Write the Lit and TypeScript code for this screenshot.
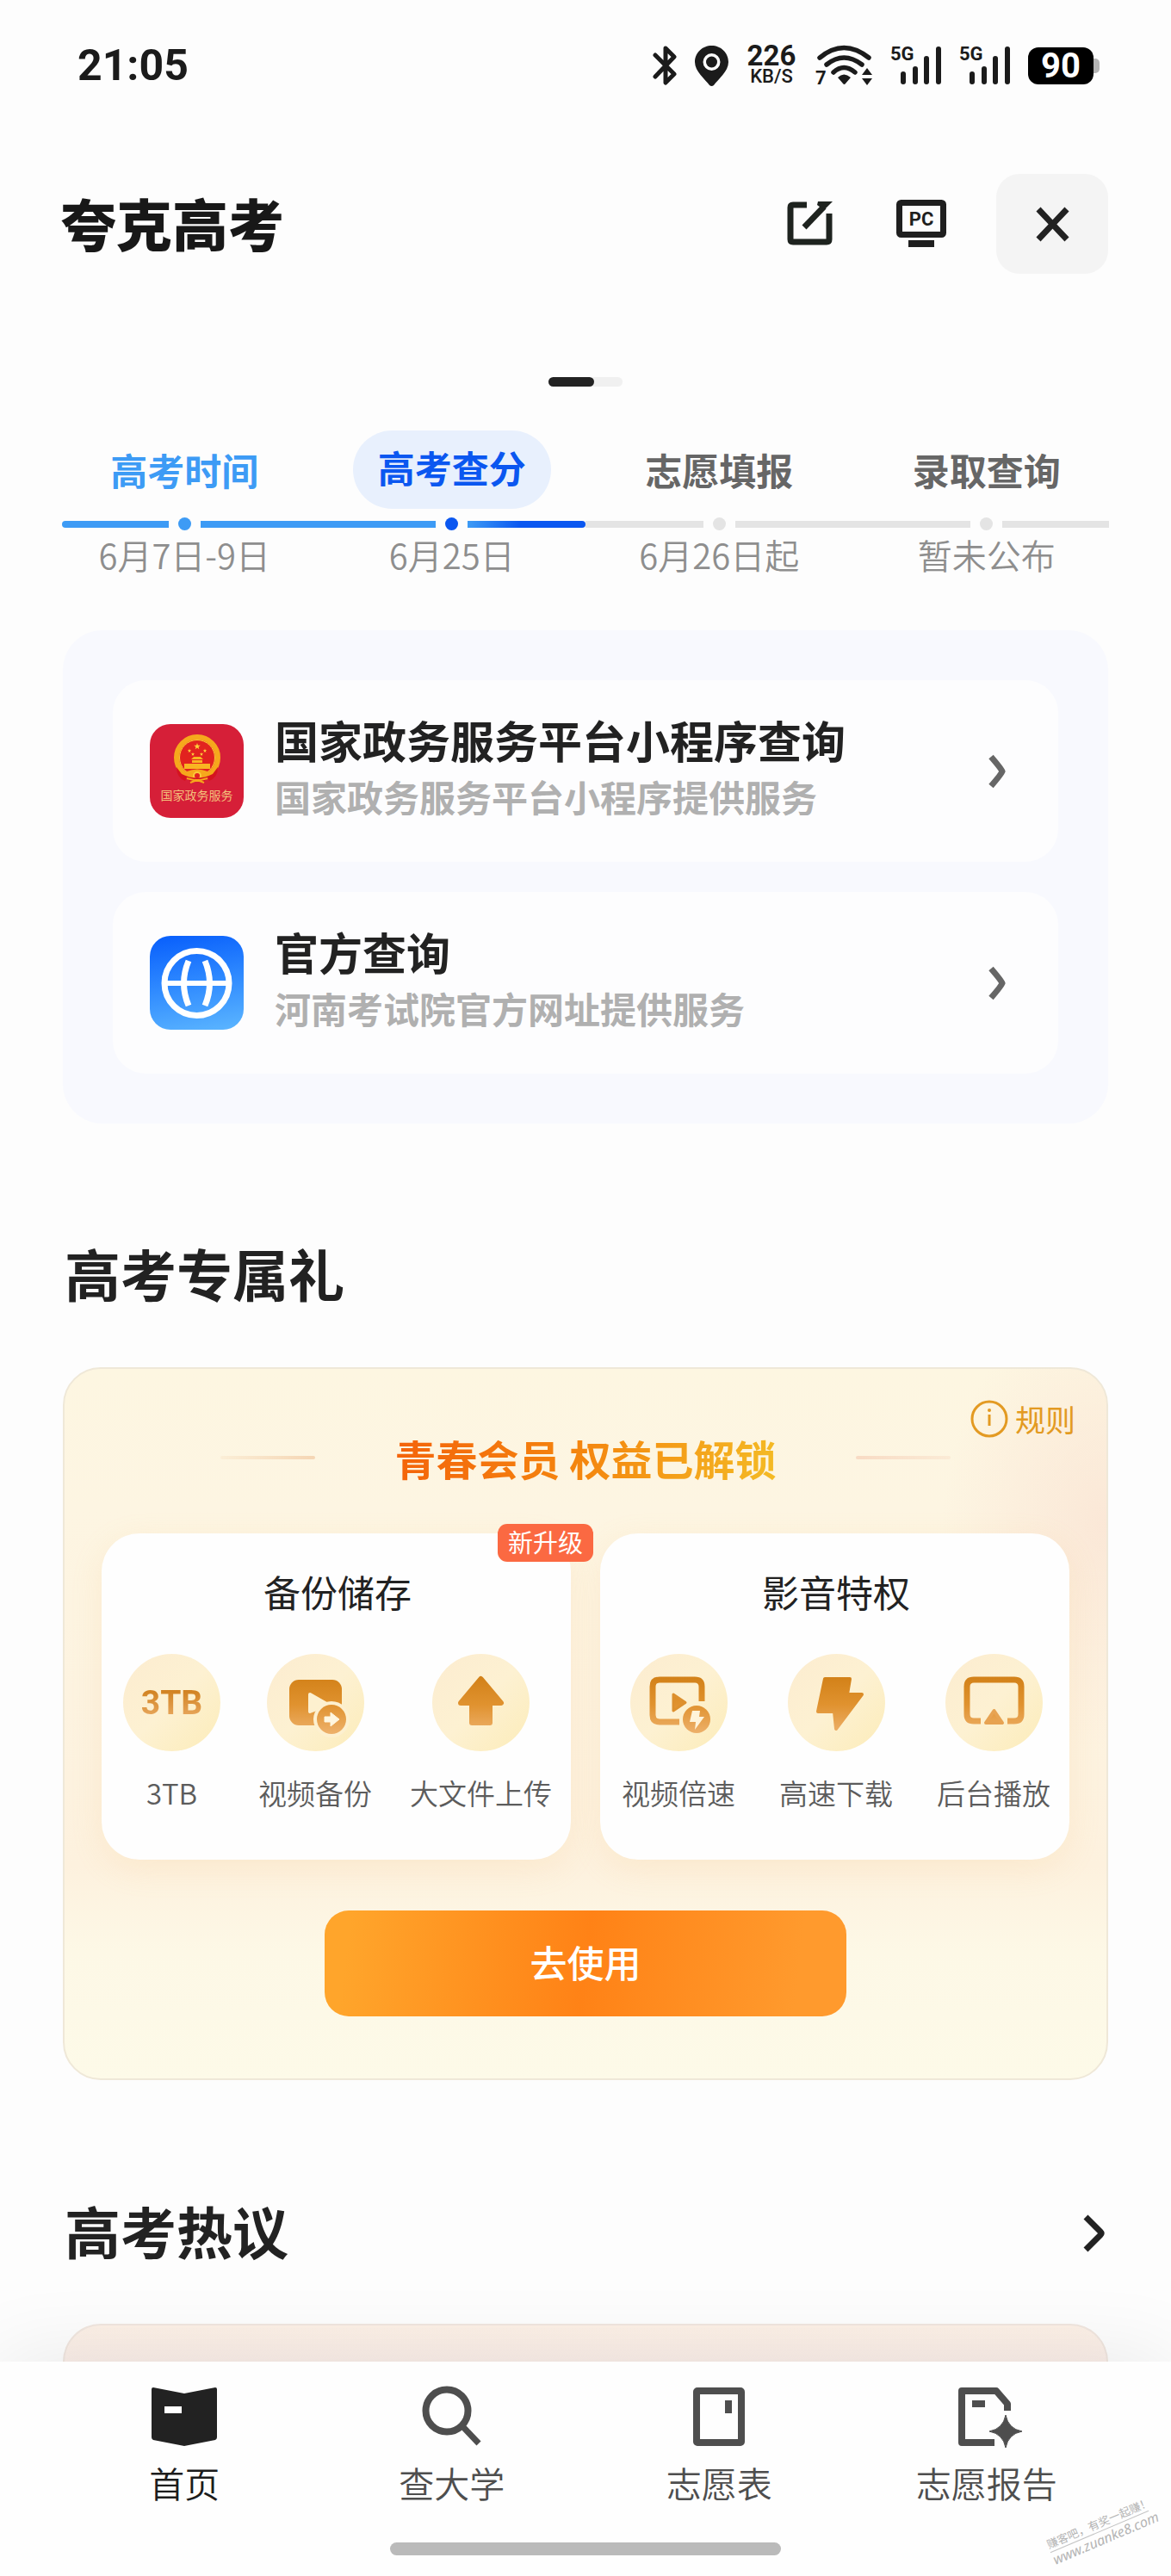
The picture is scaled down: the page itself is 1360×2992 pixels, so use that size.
import { LitElement, html, css, svg } from "lit";
import { customElement, state } from "lit/decorators.js";
import { classMap } from "lit/directives/class-map.js";

interface Stage {
  name: string;
  date: string;
  before: string;
  dot: string;
  after: string;
}

const stages: Stage[] = [
  { name: "高考时间", date: "6月7日-9日", before: "past", dot: "past", after: "past" },
  { name: "高考查分", date: "6月25日", before: "past", dot: "now", after: "fade" },
  { name: "志愿填报", date: "6月26日起", before: "next", dot: "next", after: "next" },
  { name: "录取查询", date: "暂未公布", before: "next", dot: "next", after: "next" },
];

const star = (cx: number, cy: number, r: number) => {
  let d = "";
  for (let i = 0; i < 10; i++) {
    const a = (Math.PI / 5) * i - Math.PI / 2;
    const q = i % 2 ? r * 0.4 : r;
    d += `${i ? "L" : "M"}${(cx + q * Math.cos(a)).toFixed(2)} ${(cy + q * Math.sin(a)).toFixed(2)}`;
  }
  return d + "Z";
};

const emblem = html`<svg class="emblem" viewBox="0 0 64 58" aria-hidden="true">
  <circle cx="32" cy="27" r="24" fill="#e2231f" stroke="#f6a81c" stroke-width="6" />
  <circle cx="32" cy="27" r="20.500" fill="none" stroke="#fbc93a" stroke-width="1" />
  <path d=${star(32, 14, 4)} fill="#fdd23c" />
  <path d=${star(23, 19, 2.4) + star(41, 19, 2.4) + star(27, 23, 2.2) + star(37, 23, 2.2)} fill="#fdd23c" />
  <path d="M25 29 L28 26 H36 L39 29 Z M26 30 H38 V33 H26 Z M17 34 H47 V40 H17 Z" fill="#f9b522" />
  <path d="M20 43 Q32 38 44 43 L47 50 Q32 43 17 50 Z" fill="#f6a81c" />
  <circle cx="32" cy="48" r="4" fill="#e2231f" stroke="#fbc93a" stroke-width="2" />
  <path d="M8 38 Q8 50 18 54 L20 50 L24 55 L30 52 H34 L40 55 L44 50 L46 54 Q56 50 56 38 L50 46 Q32 55 14 46 Z" fill="#d5131f" />
  <path d="M20 51 L32 54 L44 51 M24 56 L32 53 L40 56" fill="none" stroke="#f6a81c" stroke-width="2" />
</svg>`;

const globe = html`<svg class="globe" viewBox="0 0 109 109" aria-hidden="true">
  <g fill="none" stroke="#fff">
    <circle cx="54.5" cy="55" r="37.500" stroke-width="7" />
    <path d="M18 55 H91" stroke-width="6" />
    <path d="M45 29 Q34 55 45 81 M64 29 Q75 55 64 81" stroke-width="7" />
  </g>
</svg>`;

const services = [
  { name: "国家政务服务平台小程序查询", note: "国家政务服务平台小程序提供服务", kind: "gov", art: emblem, caption: "国家政务服务" },
  { name: "官方查询", note: "河南考试院官方网址提供服务", kind: "web", art: globe, caption: "" },
];

const gold = (id: string) => svg`<linearGradient id=${id} gradientUnits="userSpaceOnUse" x1="0" y1="26" x2="0" y2="92">
  <stop offset="0" stop-color="#d28118" /><stop offset=".5" stop-color="#e0922f" /><stop offset="1" stop-color="#edb06a" />
</linearGradient>`;

const disc = (body: unknown, id: string) => html`<svg viewBox="0 0 113 113" aria-hidden="true">
  <defs>${gold(id)}</defs>${body}
</svg>`;

const benefits = [
  {
    title: "备份储存",
    badge: "新升级",
    items: [
      { label: "3TB", art: html`<span class="capacity">3TB</span>` },
      {
        label: "视频备份",
        art: disc(svg`
          <rect x="26" y="30" width="61" height="53" rx="11" fill="url(#g1)" />
          <path d="M50 47 L71 59 L50 67 Z" fill="#fdf0cf" stroke="#fdf0cf" stroke-width="4" stroke-linejoin="round" />
          <circle cx="75" cy="76" r="21" fill="#fdf0cf" />
          <circle cx="75" cy="76" r="17" fill="url(#g1)" />
          <path d="M67 73 H74 V68 L84 76 L74 84 V79 H67 Z" fill="#fff6df" stroke="#fff6df" stroke-width="1" stroke-linejoin="round" />`, "g1"),
      },
      {
        label: "大文件上传",
        art: disc(svg`
          <path d="M56.500 29 L80 57 H67 V80 H46 V57 H33 Z" fill="url(#g2)" stroke="url(#g2)" stroke-width="6" stroke-linejoin="round" />`, "g2"),
      },
    ],
  },
  {
    title: "影音特权",
    badge: "",
    items: [
      {
        label: "视频倍速",
        art: disc(svg`
          <path d="M57 79 H34 Q26 79 26 71 V38 Q26 30 34 30 H75 Q83 30 83 38 V55" fill="none" stroke="url(#g3)" stroke-width="7" />
          <path d="M50 47 L64 56.500 L50 66 Z" fill="url(#g3)" stroke="#dd902e" stroke-width="3" stroke-linejoin="round" />
          <circle cx="77" cy="76" r="16" fill="url(#g3)" />
          <path d="M72 66 H81 L80 73 H86 L75 88 L76 79 H69 Z" fill="#fff4da" />`, "g3"),
      },
      {
        label: "高速下载",
        art: disc(svg`
          <path d="M43 29 H72 L69 47 H86 L56 87 L54 67 H35 Z" fill="url(#g4)" stroke="url(#g4)" stroke-width="4" stroke-linejoin="round" />`, "g4"),
      },
      {
        label: "后台播放",
        art: disc(svg`
          <path d="M41 78 H33 Q25 78 25 70 V38 Q25 30 33 30 H80 Q88 30 88 38 V70 Q88 78 80 78 H72" fill="none" stroke="url(#g5)" stroke-width="7" />
          <path d="M56.500 66 L66 80 H47 Z" fill="url(#g5)" stroke="#e7a352" stroke-width="4" stroke-linejoin="round" />`, "g5"),
      },
    ],
  },
];

const navItems = [
  {
    label: "首页",
    art: svg`<path d="M4 2 Q2 2 2 4 V60 Q2 62 4 63 L40 70 L76 63 Q78 62 78 60 V4 Q78 2 76 2 L40 9 Z" fill="#222" />
      <path d="M17 24 H37 V32 H17 Z" fill="#fff" />`,
  },
  {
    label: "查大学",
    art: svg`<g fill="none" stroke="#4e4e4e" stroke-width="8"><circle cx="34" cy="29" r="24.500" /><path d="M52 47 L71 67" stroke-width="7" /></g>`,
  },
  {
    label: "志愿表",
    art: svg`<rect x="14" y="6" width="52" height="60" rx="1" fill="none" stroke="#4e4e4e" stroke-width="8" stroke-linejoin="round" />
      <path d="M47 17 H55 V32 H47 Z" fill="#4e4e4e" />`,
  },
  {
    label: "志愿报告",
    art: svg`<path d="M49 66 H11 V6 H51 L64 21 V29" fill="none" stroke="#4e4e4e" stroke-width="8" stroke-linejoin="round" />
      <path d="M23 17 H38 V25 H23 Z" fill="#4e4e4e" />
      <path d="M62 34 Q65 50 81 53 Q65 56 62 72 Q59 56 43 53 Q59 50 62 34 Z" fill="#4e4e4e" stroke="#4e4e4e" stroke-width="1" />`,
  },
];

const signal = html`<svg class="signal" viewBox="0 0 60 48" role="img" aria-label="5G">
  <text x="0" y="18" class="gen">5G</text>
  <path d="M15 34 V43 M29 28 V43 M42 16 V43 M56 5 V43" fill="none" stroke="#1b1b1b" stroke-width="6" stroke-linecap="round" />
</svg>`;

@customElement("app-root")
export class AppRoot extends LitElement {
  @state() private stage = 1;
  @state() private tab = 0;

  static styles = css`
    :host {
      display: block;
      font-family: Roboto, "Noto Sans CJK SC", sans-serif;
      color: #222;
      background: #fdfdfd;
    }
    * { box-sizing: border-box; }
    svg { display: block; flex: none; overflow: visible; }
    h1, h2, h3, p { margin: 0; }
    a { color: inherit; text-decoration: none; }
    button { font: inherit; color: inherit; background: none; border: 0; padding: 0; cursor: pointer; }

    .page { display: flex; flex-direction: column; min-height: 100vh; overflow: hidden; }
    h1, h2, h3, .stages, .services, .gift, nav { font-family: "Noto Sans CJK SC", sans-serif; }

    .status { display: flex; justify-content: space-between; align-items: center; height: 48px; margin-top: 52px; padding: 0 83px 0 90px; color: #1b1b1b; }
    .clock { font-size: 50px; line-height: 48px; font-weight: 700; }
    .indicators { display: flex; align-items: center; gap: 20px; }
    .bt { width: 28px; height: 48px; }
    .pin { width: 39px; height: 48px; }
    .wifi { width: 68px; height: 48px; }
    .signal { width: 60px; height: 48px; }
    .gen { font: 700 22px Roboto, sans-serif; fill: #1b1b1b; }
    .seven { font: 700 22px Roboto, sans-serif; fill: #1b1b1b; }
    .speed { display: flex; flex-direction: column; align-items: center; width: 60px; font-weight: 700; }
    .rate { font-size: 33px; line-height: 26px; }
    .unit { font-size: 22px; line-height: 22px; font-weight: 500; }
    .battery { display: flex; align-items: center; }
    .level { width: 76px; height: 43px; border-radius: 12px; background: #000; color: #fff; font-size: 40px; line-height: 44px; font-weight: 700; text-align: center; }
    .nub { width: 7px; height: 17px; border-radius: 0 5px 5px 0; background: #b4b4b4; }

    header { display: flex; align-items: center; justify-content: space-between; margin-top: 102px; padding: 0 71px 0 70px; padding-right: 73px; }
    h1 { padding-bottom: 4px; font-size: 65px; line-height: 84px; font-weight: 900; color: #181818; }
    .tools { display: flex; gap: 14px; }
    .tool { display: flex; align-items: center; justify-content: center; width: 116px; height: 116px; }
    .tool svg { width: 60px; height: 58px; }
    .close { width: 130px; margin-left: 15px; border-radius: 27px; background: #f4f4f4; }
    .pc { font: 700 22px Roboto, sans-serif; fill: #1f1f1f; }

    .pager { display: flex; width: 86px; height: 11px; margin: 120px auto 0; border-radius: 6px; background: #f0f0f0; }
    .pager-on { width: 53px; border-radius: 6px; background: #222; }

    .stages { display: grid; grid-template-columns: repeat(4, 1fr); margin-top: 51px; padding: 0 59px; }
    .stage { display: flex; flex-direction: column; align-items: center; }
    .stage-name { height: 91px; padding: 0 29px 2px; border-radius: 46px; font-size: 43px; line-height: 50px; font-weight: 700; color: #666; white-space: nowrap; }
    .stage-name.done { color: #3d9bf5; }
    .stage-name.active { color: #0b57f0; background: #e8f0fd; padding-bottom: 8px; }
    .track { display: grid; grid-template-columns: 1fr 15px 1fr; align-items: center; gap: 11px; width: 100%; height: 15px; margin-top: 10px; }
    .seg { height: 8px; }
    .stage:first-child .seg:first-child { margin-left: 13px; border-radius: 4px 0 0 4px; }
    .stage:last-child .seg:last-child { margin-right: 13px; }
    .dot { width: 15px; height: 15px; border-radius: 50%; }
    .past { background: #3d9bf5; }
    .now { background: #0b57f0; }
    .next { background: #e4e4e4; }
    .fade { border-radius: 0 4px 4px 0; background: linear-gradient(90deg, #3d9bf5, #0b57f0 45%); }
    .stage-date { margin-top: -2px; font-size: 40px; line-height: 60px; font-weight: 350; color: #8e8e8e; }

    .body { display: flex; flex-direction: column; flex: 1; padding: 0 73px; }
    .services { display: flex; flex-direction: column; gap: 35px; margin-top: 58px; padding: 58px; border-radius: 46px; background: #f8f9fe; }
    .service { display: flex; align-items: center; height: 211px; padding: 0 60px 0 43px; border-radius: 38px; background: #fdfdfe; }
    .logo { display: flex; flex-direction: column; align-items: center; flex: none; width: 109px; height: 109px; border-radius: 24px; overflow: hidden; }
    .gov { padding-top: 12px; background: #d61f38; }
    .web { background: linear-gradient(170deg, #0b62fc 5%, #2f8aff 50%, #5cb6ff); }
    .emblem { width: 64px; height: 58px; }
    .globe { width: 109px; height: 109px; }
    .caption { font-size: 14px; line-height: 24px; color: #f3bf7a; white-space: nowrap; }
    .service-text { flex: 1; min-width: 0; margin-left: 36px; padding-bottom: 8px; }
    h3.service-name { font-size: 51px; line-height: 66px; font-weight: 700; }
    .service-note { font-size: 42px; line-height: 66px; font-weight: 700; color: #b0b0b0; }
    .chev { width: 22px; height: 42px; }

    .section-head { display: flex; align-items: center; justify-content: space-between; margin-top: 133px; }
    h2 { padding-left: 2px; font-size: 65px; line-height: 80px; font-weight: 700; }
    .more { width: 30px; height: 48px; margin-top: 8px; }

    .gift { position: relative; margin-top: 70px; padding: 71px 43px 72px; border: 2px solid #efe8d8; border-radius: 44px;
      background:
        radial-gradient(ellipse 190px 260px at 100% 22%, rgba(250, 228, 212, .8), rgba(250, 228, 212, 0)),
        linear-gradient(180deg, #fdf6e1 0%, #fdf5e2 20%, #fdf1de 70%, #fdf8e6 82%, #fdfae8 100%); }
    .rules { position: absolute; top: 35px; right: 36px; display: flex; align-items: center; gap: 8px; font-size: 35px; line-height: 46px; color: #e39a22; }
    .rules svg { width: 44px; height: 44px; }
    .gift-head { display: flex; align-items: center; justify-content: center; gap: 93px; }
    .gift-title { font-size: 48px; line-height: 64px; font-weight: 700; color: transparent; background: linear-gradient(100deg, #f4630a, #f4870f 50%, #f4bb25); background-clip: text; -webkit-background-clip: text; white-space: nowrap; }
    .rule { width: 110px; height: 4px; border-radius: 2px; background: linear-gradient(90deg, rgba(244, 208, 170, .2), #f5d6b4); }
    .rule.flip { background: linear-gradient(90deg, #f8dbc4, rgba(248, 219, 196, .4)); }
    .perks { display: grid; grid-template-columns: 1fr 1fr; gap: 34px; margin-top: 56px; }
    .perk { position: relative; padding: 37px 22px 58px 25px; border-radius: 44px; background: #fefefe; box-shadow: 0 10px 36px rgba(240, 190, 120, .16); }
    .badge { position: absolute; top: -11px; right: -26px; z-index: 1; padding: 0 12px 4px; border-radius: 11px; background: #fb6942; color: #fff; font-size: 29px; line-height: 40px; }
    h3.perk-name { font-size: 43px; line-height: 60px; font-weight: 400; text-align: center; }
    .perk-row { display: flex; justify-content: space-between; margin-top: 43px; }
    .perk-item { display: flex; flex-direction: column; align-items: center; gap: 28px; }
    .disc { display: flex; align-items: center; justify-content: center; width: 113px; height: 113px; border-radius: 50%; background: linear-gradient(135deg, #fcecd0, #fdf1d2 50%, #fcecb9); }
    .disc svg { width: 113px; height: 113px; }
    .capacity { font: 700 39px/50px Roboto, sans-serif; color: transparent; background: linear-gradient(180deg, #cf7f1c 15%, #e9a960 85%); background-clip: text; -webkit-background-clip: text; }
    .perk-label { font-size: 33px; line-height: 40px; font-weight: 350; color: #5c5c5c; white-space: nowrap; }
    .use { display: block; width: 54%; height: 123px; margin: 59px auto 0; padding-bottom: 6px; border-radius: 28px; background: linear-gradient(97deg, #ffa52b 5%, #ff8216 50%, #ff9a2d 90%); color: #fff; font-size: 43px; line-height: 60px; font-weight: 500; }

    .hot-card { flex: 1; min-height: 44px; margin-top: 69px; border: 2px solid #f0e6df; border-bottom: 0; border-radius: 44px 44px 0 0; background: linear-gradient(180deg, #fcf0e6, #faeee9 44px); }
    .hot { margin-top: 134px; }

    nav { position: relative; padding-bottom: 24px; background: #fefefe; box-shadow: 0 0 100px rgba(0, 0, 0, .09); }
    .tabs { display: grid; grid-template-columns: repeat(4, 1fr); padding: 28px 59px 0; }
    .tab { display: flex; flex-direction: column; align-items: center; gap: 15px; font-size: 41px; line-height: 50px; color: #4e4e4e; font-weight: 350; }
    .tab.on { color: #1c1c1c; }
    .tab svg { width: 80px; height: 72px; }
    .home-bar { width: 33.3333%; height: 15px; margin: 45px auto 0; border-radius: 8px; background: #bababa; }
    .stamp { position: absolute; right: 21px; bottom: 33px; width: 124px; transform: rotate(-23deg); font-size: 13px; line-height: 18px; color: #b4b4b4; text-align: center; white-space: nowrap; }
    .stamp-site { border-top: 1px solid #c4c4c4; font-family: "Noto Sans", sans-serif; font-style: italic; font-size: 16px; }
  `;

  private renderStatus() {
    return html`<div class="status">
      <span class="clock">21:05</span>
      <div class="indicators">
        <svg class="bt" viewBox="0 0 28 48" aria-hidden="true">
          <path d="M2 12 L24 34 L14 44 V4 L24 14 L2 37" fill="none" stroke="#1b1b1b" stroke-width="5" stroke-linejoin="round" stroke-linecap="round" />
        </svg>
        <svg class="pin" viewBox="0 0 39 48" aria-hidden="true">
          <path fill-rule="evenodd" d="M19.500 1 C9 1 0 9 0 20 C0 31 12 40 17 47 Q19.500 49 22 47 C27 40 39 31 39 20 C39 9 30 1 19.500 1 Z M19.500 10 A10 10 0 1 1 19.500 30 A10 10 0 1 1 19.500 10 Z" fill="#1b1b1b" />
          <circle cx="19.5" cy="20" r="6.500" fill="#1b1b1b" />
        </svg>
        <span class="speed"><span class="rate">226</span><span class="unit">KB/S</span></span>
        <svg class="wifi" viewBox="0 0 68 48" aria-hidden="true">
          <text x="1" y="46" class="seven">7</text>
          <g fill="none" stroke="#1b1b1b" stroke-width="5.500" stroke-linecap="round">
            <path d="M6 15 Q34 -8 63 15" /><path d="M14 23 Q34 7 55 23" /><path d="M22 32 Q34 21 47 32" />
          </g>
          <path d="M27 38 Q34 31 42 38 L36 45 Q34.500 47 33 45 Z M61 27 L67 35 H55 Z M61 47 L67 39 H55 Z" fill="#1b1b1b" />
        </svg>
        ${signal}${signal}
        <span class="battery"><span class="level">90</span><span class="nub"></span></span>
      </div>
    </div>`;
  }

  private renderHeader() {
    return html`<header>
      <h1>夸克高考</h1>
      <div class="tools">
        <button class="tool" aria-label="编辑">
          <svg viewBox="0 0 60 58" aria-hidden="true">
            <path d="M27 7 H11 Q8 7 8 10 V47 Q8 50 11 50 H50 Q53 50 53 47 V17" fill="none" stroke="#1e231f" stroke-width="7" />
            <path d="M24 33 L47 9" stroke="#1e231f" stroke-width="7" />
            <path d="M40 3 H57 L47 13 L39 7 Z" fill="#1e231f" />
          </svg>
        </button>
        <button class="tool" aria-label="电脑版">
          <svg viewBox="0 0 60 58" aria-hidden="true">
            <rect x="4.500" y="4.500" width="51" height="37" rx="2" fill="none" stroke="#1f1f1f" stroke-width="7" />
            <text class="pc" x="30" y="31" text-anchor="middle">PC</text>
            <path d="M15 48 H45 V56 H15 Z" fill="#1f1f1f" />
          </svg>
        </button>
        <button class="tool close" aria-label="关闭">
          <svg viewBox="0 0 60 58" aria-hidden="true">
            <path d="M14 12 L47 47 M47 12 L14 47" stroke="#222" stroke-width="7" />
          </svg>
        </button>
      </div>
    </header>`;
  }

  private renderGift() {
    return html`<section class="gift">
      <a class="rules" href="#rules">
        <svg viewBox="0 0 44 44" aria-hidden="true">
          <circle cx="22" cy="22" r="20" fill="none" stroke="#e39a22" stroke-width="3" />
          <path d="M22 17 V30" stroke="#e39a22" stroke-width="3" /><circle cx="22" cy="12" r="2" fill="#e39a22" />
        </svg>
        规则
      </a>
      <div class="gift-head">
        <span class="rule"></span>
        <p class="gift-title">青春会员 权益已解锁</p>
        <span class="rule flip"></span>
      </div>
      <div class="perks">
        ${benefits.map((b) => html`<div class="perk">
          ${b.badge ? html`<span class="badge">${b.badge}</span>` : ""}
          <h3 class="perk-name">${b.title}</h3>
          <div class="perk-row">
            ${b.items.map((i) => html`<div class="perk-item">
              <span class="disc">${i.art}</span>
              <span class="perk-label">${i.label}</span>
            </div>`)}
          </div>
        </div>`)}
      </div>
      <button class="use">去使用</button>
    </section>`;
  }

  render() {
    return html`<div class="page">
      ${this.renderStatus()}${this.renderHeader()}
      <div class="pager"><span class="pager-on"></span></div>
      <div class="stages">
        ${stages.map((s, i) => html`<div class="stage">
          <button
            class=${classMap({ "stage-name": true, done: i < this.stage, active: i === this.stage })}
            @click=${() => (this.stage = i)}
          >${s.name}</button>
          <div class="track">
            <span class="seg ${s.before}"></span><span class="dot ${s.dot}"></span><span class="seg ${s.after}"></span>
          </div>
          <span class="stage-date">${s.date}</span>
        </div>`)}
      </div>
      <main class="body">
        <section class="services">
          ${services.map((s) => html`<a class="service" href="#${s.kind}">
            <span class="logo ${s.kind}">${s.art}${s.caption ? html`<span class="caption">${s.caption}</span>` : ""}</span>
            <div class="service-text">
              <h3 class="service-name">${s.name}</h3>
              <p class="service-note">${s.note}</p>
            </div>
            <svg class="chev" viewBox="0 0 22 42" aria-hidden="true">
              <path d="M4 4 Q16 18 17 21 Q16 24 4 38" fill="none" stroke="#666" stroke-width="7" />
            </svg>
          </a>`)}
        </section>
        <div class="section-head"><h2>高考专属礼</h2></div>
        ${this.renderGift()}
        <a class="section-head hot" href="#hot">
          <h2>高考热议</h2>
          <svg class="more" viewBox="0 0 30 48" aria-hidden="true">
            <path d="M4 5 L21 22 Q23 24 21 26 L4 43" fill="none" stroke="#222" stroke-width="7" />
          </svg>
        </a>
        <div class="hot-card"></div>
      </main>
      <nav>
        <div class="tabs">
          ${navItems.map((n, i) => html`<a
            class=${classMap({ tab: true, on: i === this.tab })}
            href="#tab${i}"
            @click=${() => (this.tab = i)}
          ><svg viewBox="0 0 80 72" aria-hidden="true">${n.art}</svg>${n.label}</a>`)}
        </div>
        <div class="home-bar"></div>
        <div class="stamp">
          <div>赚客吧，有奖一起赚！</div>
          <div class="stamp-site">www.zuanke8.com</div>
        </div>
      </nav>
    </div>`;
  }
}
